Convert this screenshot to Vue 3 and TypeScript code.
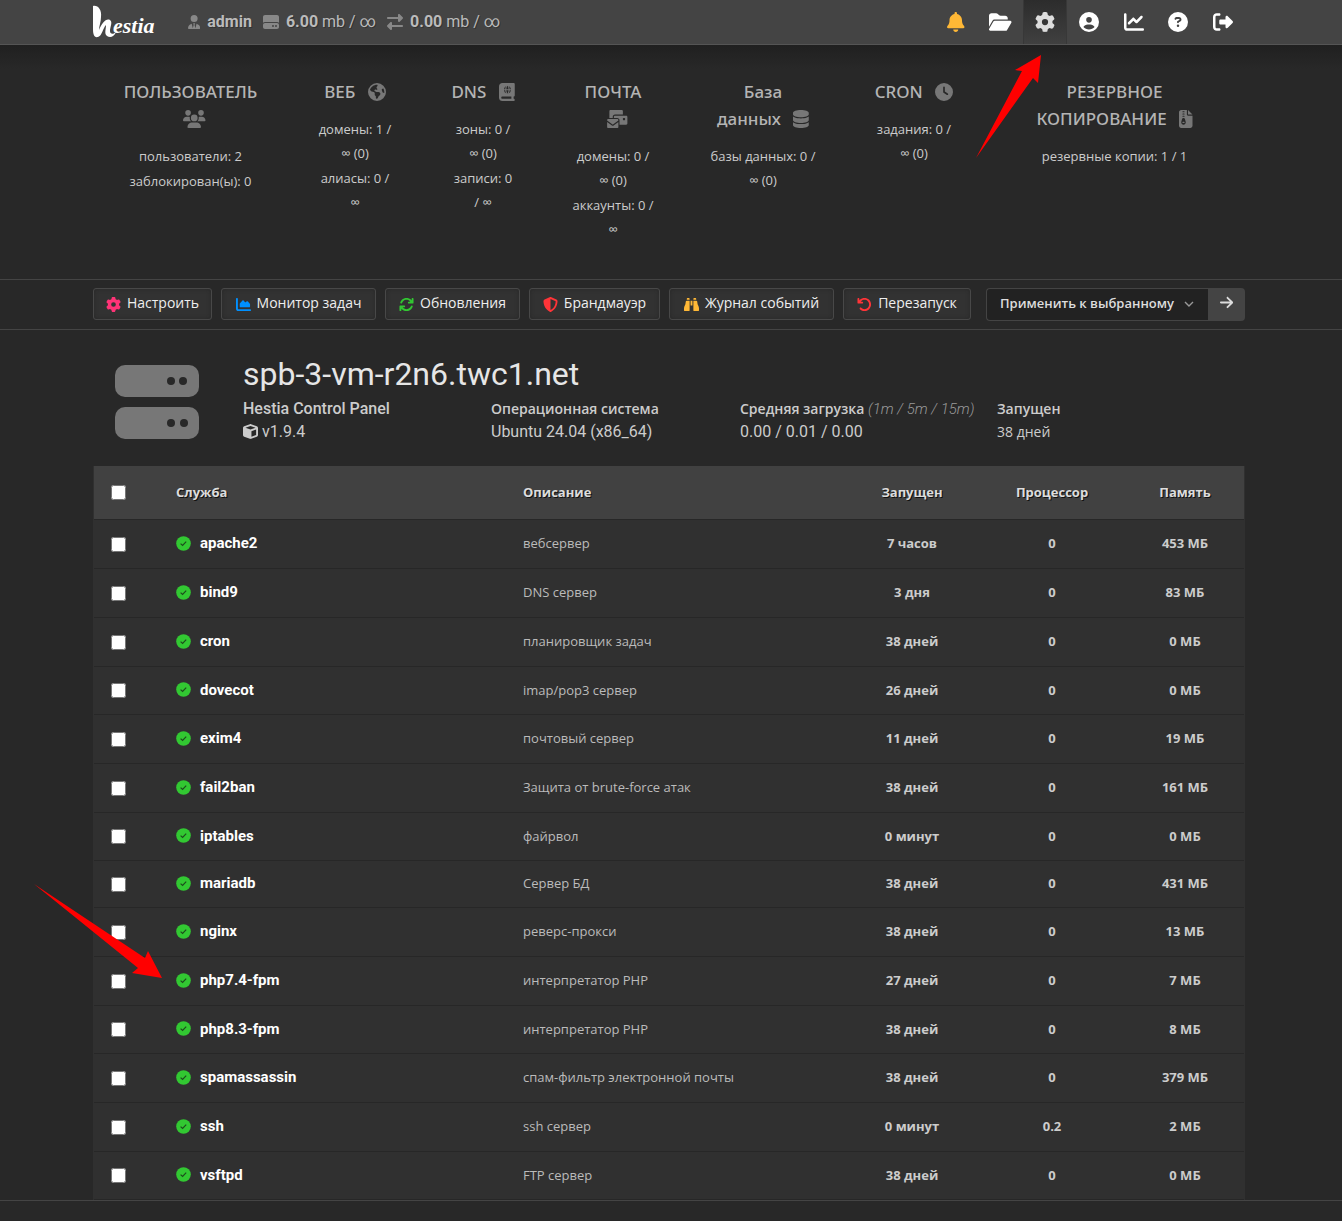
<script setup lang="ts">
import { ref } from 'vue'

interface Glyph {
  w: number
  d: string
}

const icons: Record<string, Glyph> = {
  gear: { w: 512, d: 'M495.9 166.6c3.2 8.7 .5 18.4-6.4 24.6l-43.3 39.4c1.1 8.3 1.7 16.8 1.7 25.4s-.6 17.1-1.7 25.4l43.3 39.4c6.9 6.2 9.6 15.9 6.4 24.6c-4.4 11.9-9.7 23.3-15.8 34.3l-4.7 8.1c-6.6 11-14 21.4-22.1 31.2c-5.9 7.2-15.7 9.6-24.5 6.8l-55.7-17.7c-13.4 10.3-28.2 18.9-44 25.4l-12.5 57.1c-2 9.1-9 16.3-18.2 17.8c-13.8 2.3-28 3.5-42.5 3.5s-28.7-1.2-42.5-3.5c-9.2-1.5-16.2-8.7-18.2-17.8l-12.5-57.1c-15.8-6.5-30.6-15.1-44-25.4L83.1 425.9c-8.8 2.8-18.6 .3-24.5-6.8c-8.1-9.8-15.5-20.2-22.1-31.2l-4.7-8.1c-6.1-11-11.4-22.4-15.8-34.3c-3.2-8.7-.5-18.4 6.4-24.6l43.3-39.4C64.6 273.1 64 264.6 64 256s.6-17.1 1.7-25.4L22.4 191.2c-6.9-6.2-9.6-15.9-6.4-24.6c4.4-11.9 9.7-23.3 15.8-34.3l4.7-8.1c6.6-11 14-21.4 22.1-31.2c5.9-7.2 15.7-9.6 24.5-6.8l55.7 17.7c13.4-10.3 28.2-18.9 44-25.4l12.5-57.1c2-9.1 9-16.3 18.2-17.8C227.3 1.2 241.5 0 256 0s28.7 1.2 42.5 3.5c9.2 1.5 16.2 8.7 18.2 17.8l12.5 57.1c15.8 6.5 30.6 15.1 44 25.4l55.7-17.7c8.8-2.8 18.6-.3 24.5 6.8c8.1 9.8 15.5 20.2 22.1 31.2l4.7 8.1c6.1 11 11.4 22.4 15.8 34.3zM256 336a80 80 0 1 0 0-160 80 80 0 1 0 0 160z' },
  bell: { w: 448, d: 'M224 0c-17.7 0-32 14.3-32 32V51.2C119 66 64 130.6 64 208v18.8c0 47-17.3 92.4-48.5 127.6l-7.4 8.3c-8.4 9.4-10.4 22.9-5.3 34.4S19.4 416 32 416H416c12.6 0 24-7.4 29.2-18.9s3.1-25-5.3-34.4l-7.4-8.3C401.3 319.2 384 273.9 384 226.8V208c0-77.4-55-142-128-156.8V32c0-17.7-14.3-32-32-32zm45.3 493.3c12-12 18.7-28.3 18.7-45.3H224 160c0 17 6.7 33.3 18.7 45.3s28.3 18.7 45.3 18.7s33.3-6.7 45.3-18.7z' },
  folder: { w: 576, d: 'M88.7 223.8L0 375.8V96C0 60.7 28.7 32 64 32H181.5c17 0 33.3 6.7 45.3 18.7l26.5 26.5c12 12 28.3 18.7 45.3 18.7H416c35.3 0 64 28.7 64 64v32H144c-22.8 0-43.8 12.1-55.3 31.8zm27.6 16.1C122.1 230 132.6 224 144 224H544c11.5 0 22 6.1 27.7 16.1s5.7 22.2-.1 32.1l-112 192C453.9 474 443.4 480 432 480H32c-11.5 0-22-6.1-27.7-16.1s-5.7-22.2 .1-32.1l112-192z' },
  user: { w: 512, d: 'M399 384.2C376.9 345.8 335.4 320 288 320H224c-47.4 0-88.9 25.8-111 64.2c35.2 39.2 86.2 63.8 143 63.8s107.8-24.7 143-63.8zM0 256a256 256 0 1 1 512 0A256 256 0 1 1 0 256zm256 16a72 72 0 1 0 0-144 72 72 0 1 0 0 144z' },
  chart: { w: 512, d: 'M64 64c0-17.7-14.3-32-32-32S0 46.3 0 64V400c0 44.2 35.8 80 80 80H480c17.7 0 32-14.3 32-32s-14.3-32-32-32H80c-8.8 0-16-7.2-16-16V64zm406.6 86.6c12.5-12.5 12.5-32.8 0-45.3s-32.8-12.5-45.3 0L320 210.7l-57.4-57.4c-12.5-12.5-32.8-12.5-45.3 0l-112 112c-12.5 12.5-12.5 32.8 0 45.3s32.8 12.5 45.3 0L240 221.3l57.4 57.4c12.5 12.5 32.8 12.5 45.3 0l128-128z' },
  help: { w: 512, d: 'M256 512A256 256 0 1 0 256 0a256 256 0 1 0 0 512zM169.8 165.3c7.9-22.3 29.1-37.3 52.8-37.3h58.3c34.9 0 63.1 28.3 63.1 63.1c0 22.6-12.1 43.5-31.7 54.8L280 264.4c-.2 13-10.9 23.6-24 23.6c-13.3 0-24-10.7-24-24V250.5c0-8.6 4.6-16.5 12.1-20.8l44.3-25.4c4.7-2.7 7.6-7.7 7.6-13.1c0-8.4-6.8-15.1-15.1-15.1H222.6c-3.4 0-6.4 2.1-7.5 5.3l-.4 1.2c-4.4 12.5-18.2 19-30.6 14.6s-19-18.2-14.6-30.6l.4-1.2zM224 352a32 32 0 1 1 64 0 32 32 0 1 1 -64 0z' },
  exit: { w: 512, d: 'M377.9 105.9L500.7 228.7c7.2 7.2 11.3 17.1 11.3 27.3s-4.1 20.1-11.3 27.3L377.9 406.1c-6.4 6.4-15 9.9-24 9.9c-18.7 0-33.9-15.2-33.9-33.9l0-62.1-128 0c-17.7 0-32-14.3-32-32l0-64c0-17.7 14.3-32 32-32l128 0 0-62.1c0-18.7 15.2-33.9 33.9-33.9c9 0 17.6 3.6 24 9.9zM160 96L96 96c-17.7 0-32 14.3-32 32l0 256c0 17.7 14.3 32 32 32l64 0c17.7 0 32 14.3 32 32s-14.3 32-32 32l-64 0c-53 0-96-43-96-96L0 128C0 75 43 32 96 32l64 0c17.7 0 32 14.3 32 32s-14.3 32-32 32z' },
  tie: { w: 448, d: 'M96 128a128 128 0 1 0 256 0A128 128 0 1 0 96 128zm94.5 200.2l18.6 31L175.8 483.1l-36-146.9c-2-8.1-9.8-13.4-17.9-11.3C51.9 342.4 0 405.8 0 481.3c0 17 13.8 30.7 30.7 30.7H162.5c0 0 0 0 .1 0H168 280h5.5c0 0 0 0 .1 0H417.3c17 0 30.7-13.8 30.7-30.7c0-75.5-51.9-138.9-121.9-156.4c-8.1-2-15.9 3.3-17.9 11.3l-36 146.9L238.9 359.2l18.6-31c6.4-10.7-1.3-24.2-13.7-24.2H224 204.3c-12.4 0-20.1 13.6-13.7 24.2z' },
  drive: { w: 512, d: 'M0 96C0 60.7 28.7 32 64 32H448c35.3 0 64 28.7 64 64V280.4c-17-15.2-39.4-24.4-64-24.4H64c-24.6 0-47 9.2-64 24.4V96zM64 288H448c35.3 0 64 28.7 64 64v64c0 35.3-28.7 64-64 64H64c-35.3 0-64-28.7-64-64V352c0-35.3 28.7-64 64-64zM320 416a32 32 0 1 0 0-64 32 32 0 1 0 0 64zm128-32a32 32 0 1 0 -64 0 32 32 0 1 0 64 0z' },
  traffic: { w: 512, d: 'M32 96l320 0V32c0-12.9 7.8-24.6 19.8-29.6s25.7-2.2 34.9 6.9l96 96c6 6 9.4 14.1 9.4 22.6s-3.4 16.6-9.4 22.6l-96 96c-9.2 9.2-22.9 11.9-34.9 6.9s-19.8-16.6-19.8-29.6V160L32 160c-17.7 0-32-14.3-32-32s14.3-32 32-32zM480 352c17.7 0 32 14.3 32 32s-14.3 32-32 32H160v64c0 12.9-7.8 24.6-19.8 29.6s-25.7 2.2-34.9-6.9l-96-96c-6-6-9.4-14.1-9.4-22.6s3.4-16.6 9.4-22.6l96-96c9.2-9.2 22.9-11.9 34.9-6.9s19.8 16.6 19.8 29.6l0 64H480z' },
  users: { w: 640, d: 'M144 0a80 80 0 1 1 0 160A80 80 0 1 1 144 0zM512 0a80 80 0 1 1 0 160A80 80 0 1 1 512 0zM0 298.7C0 239.8 47.8 192 106.7 192h42.7c15.9 0 31 3.5 44.6 9.7c-1.3 7.2-1.9 14.7-1.9 22.3c0 38.2 16.8 72.5 43.3 96c-.2 0-.4 0-.7 0H21.3C9.6 320 0 310.4 0 298.7zM405.3 320c-.2 0-.4 0-.7 0c26.6-23.5 43.3-57.8 43.3-96c0-7.6-.7-15-1.9-22.3c13.6-6.3 28.7-9.7 44.6-9.7h42.7C592.2 192 640 239.8 640 298.7c0 11.8-9.6 21.3-21.3 21.3H405.3zM224 224a96 96 0 1 1 192 0 96 96 0 1 1 -192 0zM128 485.3C128 411.7 187.7 352 261.3 352H378.7C452.3 352 512 411.7 512 485.3c0 14.7-11.9 26.7-26.7 26.7H154.7c-14.7 0-26.7-11.9-26.7-26.7z' },
  earth: { w: 512, d: 'M57.7 193l9.4 16.4c8.3 14.5 21.9 25.2 38 29.8L163 255.7c17.2 4.9 29 20.6 29 38.5v39.9c0 11 6.2 21 16 25.9s16 14.9 16 25.9v39c0 15.6 14.9 26.9 29.9 22.6c16.1-4.6 28.6-17.5 32.7-33.8l2.8-11.2c4.2-16.9 15.2-31.4 30.3-40l8.1-4.6c15-8.5 24.2-24.5 24.2-41.7v-8.3c0-12.7-5.1-24.9-14.1-33.9l-3.9-3.9c-9-9-21.2-14.1-33.9-14.1H257c-11.1 0-22.1-2.9-31.8-8.4l-34.5-19.7c-4.3-2.5-7.6-6.5-9.2-11.2c-3.2-9.6 1.1-20 10.2-24.5l5.9-3c6.6-3.3 14.3-3.9 21.3-1.5l23.2 7.7c8.2 2.7 17.2-.4 21.9-7.5c4.7-7 4.2-16.3-1.2-22.8l-13.6-16.3c-10-12-9.9-29.5 .3-41.3l15.7-18.3c8.8-10.3 10.2-25 3.5-36.7l-2.4-4.2c-3.5-.2-6.9-.3-10.4-.3C163.1 48 84.4 108.9 57.7 193zM464 256c0-36.8-9.6-71.4-26.4-101.5L412 164.8c-15.7 6.3-23.8 23.8-18.5 39.8l16.9 50.7c3.5 10.4 12 18.3 22.6 20.9l29.1 7.3c1.2-9 1.8-18.2 1.8-27.5zM0 256a256 256 0 1 1 512 0A256 256 0 1 1 0 256z' },
  atlas: { w: 448, d: 'M0 96C0 43 43 0 96 0H416c17.7 0 32 14.3 32 32V352c0 17.7-14.3 32-32 32v64c17.7 0 32 14.3 32 32s-14.3 32-32 32H96c-53 0-96-43-96-96V96zM64 416c0 17.7 14.3 32 32 32H352V384H96c-17.7 0-32 14.3-32 32zM176 177q4-60 32-92q-58 24-66 92zM208 177h64q-6-70-32-97q-26 27-32 97zM304 177h35q-8-68-67-92q28 32 32 92zM176 209h-34q8 66 66 90q-28-32-32-90zM208 209q6 68 32 95q26-27 32-95zM304 209q-4 58-32 90q59-24 67-90z' },
  mails: { w: 640, d: 'M128 0C110.3 0 96 14.3 96 32V224h96V192c0-35.3 28.7-64 64-64H480V32c0-17.7-14.3-32-32-32H128zM256 160c-17.7 0-32 14.3-32 32v32h96c35.3 0 64 28.7 64 64V416H576c17.7 0 32-14.3 32-32V192c0-17.7-14.3-32-32-32H256zm240 64h32c8.8 0 16 7.2 16 16v32c0 8.8-7.2 16-16 16H496c-8.8 0-16-7.2-16-16V240c0-8.8 7.2-16 16-16zM64 256c-17.7 0-32 14.3-32 32v13L187.1 415.9c1.4 1 3.1 1.6 4.9 1.6s3.5-.6 4.9-1.6L352 301V288c0-17.7-14.3-32-32-32H64zm288 84.8L216 441.6c-6.9 5.1-15.3 7.9-24 7.9s-17-2.8-24-7.9L32 340.8V480c0 17.7 14.3 32 32 32H320c17.7 0 32-14.3 32-32V340.8z' },
  database: { w: 448, d: 'M448 80v48c0 44.2-100.3 80-224 80S0 172.2 0 128V80C0 35.8 100.3 0 224 0S448 35.8 448 80zM393.2 214.7c20.8-7.4 39.9-16.9 54.8-28.6V288c0 44.2-100.3 80-224 80S0 332.2 0 288V186.1c14.9 11.8 34 21.2 54.8 28.6C99.7 230.7 159.5 240 224 240s124.3-9.3 169.2-25.3zM0 346.1c14.9 11.8 34 21.2 54.8 28.6C99.7 390.7 159.5 400 224 400s124.3-9.3 169.2-25.3c20.8-7.4 39.9-16.9 54.8-28.6V432c0 44.2-100.3 80-224 80S0 476.2 0 432V346.1z' },
  clock: { w: 512, d: 'M256 0a256 256 0 1 1 0 512A256 256 0 1 1 256 0zM232 120V256c0 8 4 15.5 10.7 20l96 64c11 7.4 25.9 4.4 33.3-6.7s4.4-25.9-6.7-33.3L280 243.2V120c0-13.3-10.7-24-24-24s-24 10.7-24 24z' },
  zip: { w: 384, d: 'M64 0C28.7 0 0 28.7 0 64V448c0 35.3 28.7 64 64 64H320c35.3 0 64-28.7 64-64V160H256c-17.7 0-32-14.3-32-32V0H64zM256 0V128H384L256 0zM96 48c0-8.8 7.2-16 16-16h32c8.8 0 16 7.2 16 16s-7.2 16-16 16H112c-8.8 0-16-7.2-16-16zm0 64c0-8.8 7.2-16 16-16h32c8.8 0 16 7.2 16 16s-7.2 16-16 16H112c-8.8 0-16-7.2-16-16zm0 64c0-8.8 7.2-16 16-16h32c8.8 0 16 7.2 16 16s-7.2 16-16 16H112c-8.8 0-16-7.2-16-16zm-6.3 71.8c3.7-14 16.4-23.8 30.9-23.8h14.8c14.5 0 27.2 9.7 30.9 23.8l23.5 88.2c1.4 5.4 2.1 10.9 2.1 16.4c0 35.2-28.8 63.7-64 63.7s-64-28.5-64-63.7c0-5.5 .7-11.1 2.1-16.4l23.5-88.2zM112 336c-8.8 0-16 7.2-16 16s7.2 16 16 16h32c8.8 0 16-7.2 16-16s-7.2-16-16-16H112z' },
  area: { w: 512, d: 'M64 64c0-17.7-14.3-32-32-32S0 46.3 0 64V400c0 44.2 35.8 80 80 80H480c17.7 0 32-14.3 32-32s-14.3-32-32-32H80c-8.8 0-16-7.2-16-16V64zm96 288H448c17.7 0 32-14.3 32-32V251.8c0-7.6-2.7-15-7.7-20.8l-65.8-76.8c-12.1-14.2-33.7-15-46.9-1.8l-21 21c-10 10-26.4 9.2-35.4-1.6l-39.2-47c-12.6-15.1-35.7-15.4-48.7-.6L135.9 215c-5.1 5.8-7.9 13.3-7.9 21.1v84c0 17.7 14.3 32 32 32z' },
  refresh: { w: 512, d: 'M105.1 202.6c7.7-21.8 20.2-42.3 37.8-59.8c62.5-62.5 163.8-62.5 226.3 0L386.3 160H336c-17.7 0-32 14.3-32 32s14.3 32 32 32H463.5c0 0 0 0 0 0h.4c17.7 0 32-14.3 32-32V64c0-17.7-14.3-32-32-32s-32 14.3-32 32v51.2L414.4 97.6c-87.5-87.5-229.3-87.5-316.8 0C73.2 122 55.6 150.7 44.8 181.4c-5.9 16.7 2.9 34.9 19.5 40.8s34.9-2.9 40.8-19.5zM39 289.3c-5 1.5-9.8 4.2-13.7 8.2c-4 4-6.7 8.8-8.1 14c-.3 1.2-.6 2.5-.8 3.8c-.3 1.7-.4 3.4-.4 5.1V448c0 17.7 14.3 32 32 32s32-14.3 32-32V396.9l17.6 17.5 0 0c87.5 87.4 229.3 87.4 316.7 0c24.4-24.4 42.1-53.1 52.9-83.7c5.9-16.7-2.9-34.9-19.5-40.8s-34.9 2.9-40.8 19.5c-7.7 21.8-20.2 42.3-37.8 59.8c-62.5 62.5-163.8 62.5-226.3 0l-.1-.1L125.6 352H176c17.7 0 32-14.3 32-32s-14.3-32-32-32H48.4c-1.6 0-3.2 .1-4.8 .3s-3.1 .5-4.6 1z' },
  shield: { w: 512, d: 'M256 0c4.6 0 9.2 1 13.4 2.9L457.7 82.8c22 9.3 38.4 31 38.3 57.2c-.5 99.2-41.3 280.7-213.6 363.2c-16.7 8-36.1 8-52.8 0C57.3 420.7 16.5 239.2 16 140c-.1-26.2 16.3-47.9 38.3-57.2L242.7 2.9C246.8 1 251.4 0 256 0zm0 66.8V444.8C394 378 431.1 230.1 432 141.4L256 66.8l0 0z' },
  binoculars: { w: 512, d: 'M128 32h32c17.7 0 32 14.3 32 32V96H96V64c0-17.7 14.3-32 32-32zm64 96V448c0 17.7-14.3 32-32 32H32c-17.7 0-32-14.3-32-32V388.9c0-34.6 9.4-68.6 27.2-98.3C40.9 267.8 49.7 242.4 53 216L60.5 156c2-16 15.6-28 31.8-28H192zm227.8 0c16.1 0 29.8 12 31.8 28L459 216c3.3 26.4 12.1 51.8 25.8 74.6c17.8 29.7 27.2 63.7 27.2 98.3V448c0 17.7-14.3 32-32 32H352c-17.7 0-32-14.3-32-32V128h99.8zM320 64c0-17.7 14.3-32 32-32h32c17.7 0 32 14.3 32 32V96H320V64zm-32 64V288H224V128h64z' },
  undo: { w: 512, d: 'M125.7 160H176c17.7 0 32 14.3 32 32s-14.3 32-32 32H48c-17.7 0-32-14.3-32-32V64c0-17.7 14.3-32 32-32s32 14.3 32 32v51.2L97.6 97.6c87.5-87.5 229.3-87.5 316.8 0s87.5 229.3 0 316.8s-229.3 87.5-316.8 0c-12.5-12.5-12.5-32.8 0-45.3s32.8-12.5 45.3 0c62.5 62.5 163.8 62.5 226.3 0s62.5-163.8 0-226.3s-163.8-62.5-226.3 0L125.7 160z' },
  cube: { w: 512, d: 'M234.5 5.7c13.9-5 29.1-5 43.1 0l192 68.6C495 83.4 512 107.5 512 134.6V377.4c0 27-17 51.2-42.5 60.3l-192 68.6c-13.9 5-29.1 5-43.1 0l-192-68.6C17 428.6 0 404.5 0 377.4V134.6c0-27 17-51.2 42.5-60.3l192-68.6zM256 66L82.3 128 256 190l173.7-62L256 66zm32 368.6l160-57.1v-188L288 246.6v188z' },
  arrow: { w: 448, d: 'M438.6 278.6c12.5-12.5 12.5-32.8 0-45.3l-160-160c-12.5-12.5-32.8-12.5-45.3 0s-12.5 32.8 0 45.3L338.8 224 32 224c-17.7 0-32 14.3-32 32s14.3 32 32 32l306.7 0L233.4 393.4c-12.5 12.5-12.5 32.8 0 45.3s32.8 12.5 45.3 0l160-160z' },
}

const box = (name: string) => `0 0 ${icons[name].w} 512`

const nav = [
  { icon: 'bell', label: 'Уведомления' },
  { icon: 'folder', label: 'Файлы' },
  { icon: 'gear', label: 'Сервер' },
  { icon: 'user', label: 'Профиль' },
  { icon: 'chart', label: 'Статистика' },
  { icon: 'help', label: 'Помощь' },
  { icon: 'exit', label: 'Выход' },
]

const stats = [
  { title: ['ПОЛЬЗОВАТЕЛЬ', ''], icon: 'users', items: [['пользователи: 2'], ['заблокирован(ы): 0']] },
  { title: ['ВЕБ'], icon: 'earth', items: [['домены: 1 /', '∞ (0)'], ['алиасы: 0 /', '∞']] },
  { title: ['DNS'], icon: 'atlas', items: [['зоны: 0 /', '∞ (0)'], ['записи: 0', '/ ∞']] },
  { title: ['ПОЧТА', ''], icon: 'mails', items: [['домены: 0 /', '∞ (0)'], ['аккаунты: 0 /', '∞']] },
  { title: ['База', 'данных'], icon: 'database', items: [['базы данных: 0 /', '∞ (0)']] },
  { title: ['CRON'], icon: 'clock', items: [['задания: 0 /', '∞ (0)']] },
  { title: ['РЕЗЕРВНОЕ', 'КОПИРОВАНИЕ'], icon: 'zip', items: [['резервные копии: 1 / 1']] },
]

const actions = [
  { icon: 'gear', tone: 'pink', label: 'Настроить' },
  { icon: 'area', tone: 'blue', label: 'Монитор задач' },
  { icon: 'refresh', tone: 'green', label: 'Обновления' },
  { icon: 'shield', tone: 'red', label: 'Брандмауэр' },
  { icon: 'binoculars', tone: 'orange', label: 'Журнал событий' },
  { icon: 'undo', tone: 'red', label: 'Перезапуск' },
]

interface Service {
  name: string
  text: string
  up: string
  cpu: string
  mem: string
}

const services: Service[] = [
  { name: 'apache2', text: 'вебсервер', up: '7 часов', cpu: '0', mem: '453 МБ' },
  { name: 'bind9', text: 'DNS сервер', up: '3 дня', cpu: '0', mem: '83 МБ' },
  { name: 'cron', text: 'планировщик задач', up: '38 дней', cpu: '0', mem: '0 МБ' },
  { name: 'dovecot', text: 'imap/pop3 сервер', up: '26 дней', cpu: '0', mem: '0 МБ' },
  { name: 'exim4', text: 'почтовый сервер', up: '11 дней', cpu: '0', mem: '19 МБ' },
  { name: 'fail2ban', text: 'Защита от brute-force атак', up: '38 дней', cpu: '0', mem: '161 МБ' },
  { name: 'iptables', text: 'файрвол', up: '0 минут', cpu: '0', mem: '0 МБ' },
  { name: 'mariadb', text: 'Сервер БД', up: '38 дней', cpu: '0', mem: '431 МБ' },
  { name: 'nginx', text: 'реверс-прокси', up: '38 дней', cpu: '0', mem: '13 МБ' },
  { name: 'php7.4-fpm', text: 'интерпретатор PHP', up: '27 дней', cpu: '0', mem: '7 МБ' },
  { name: 'php8.3-fpm', text: 'интерпретатор PHP', up: '38 дней', cpu: '0', mem: '8 МБ' },
  { name: 'spamassassin', text: 'спам-фильтр электронной почты', up: '38 дней', cpu: '0', mem: '379 МБ' },
  { name: 'ssh', text: 'ssh сервер', up: '0 минут', cpu: '0.2', mem: '2 МБ' },
  { name: 'vsftpd', text: 'FTP сервер', up: '38 дней', cpu: '0', mem: '0 МБ' },
]

const selected = ref<string[]>([])

function toggleAll(event: Event) {
  const on = (event.target as HTMLInputElement).checked
  selected.value = on ? services.map((s) => s.name) : []
}
</script>

<template>
  <div class="page">
    <header class="top">
      <div class="container top-row">
        <a class="logo" href="#" aria-label="Hestia">
          <svg viewBox="0 0 64 34" width="64" height="34">
            <path
              d="M0 1C5 0 9 5 8 12C8 17 6 21 6 25C9 18 13 13 17 15C20 17 17 22 17 26C17 29 20 30 23 27C21 32 17 33 14 31C11 29 13 24 13 20C10 23 9 31 5 32C1 33 0 29 0 24Z"
              fill="#fff"
            />
            <text x="20" y="28" class="logo-text">estia</text>
          </svg>
        </a>
        <div class="usage">
          <span class="usage-item">
            <svg class="ico dim" :viewBox="box('tie')" height="14"><path :d="icons.tie.d" /></svg>
            <b>admin</b>
          </span>
          <span class="usage-item">
            <svg class="ico dim" :viewBox="box('drive')" height="16"><path :d="icons.drive.d" /></svg>
            <span><b>6.00</b> mb / ∞</span>
          </span>
          <span class="usage-item">
            <svg class="ico dim" :viewBox="box('traffic')" height="16"><path :d="icons.traffic.d" /></svg>
            <span><b>0.00</b> mb / ∞</span>
          </span>
        </div>
        <nav class="menu">
          <a
            v-for="n in nav"
            :key="n.icon"
            href="#"
            :aria-label="n.label"
            class="menu-link"
            :class="{ active: n.icon === 'gear', bell: n.icon === 'bell' }"
          >
            <svg class="ico" :viewBox="box(n.icon)" height="20"><path :d="icons[n.icon].d" /></svg>
          </a>
        </nav>
      </div>
    </header>

    <section class="stats-band">
      <div class="container stats">
        <a v-for="s in stats" :key="s.icon" href="#" class="stat">
          <h2 class="stat-title">
            <span v-for="(line, i) in s.title" :key="i" class="line">
              {{ line }}
              <svg v-if="i === s.title.length - 1" class="ico stat-ico" :viewBox="box(s.icon)" height="18">
                <path :d="icons[s.icon].d" />
              </svg>
            </span>
          </h2>
          <p v-for="(item, j) in s.items" :key="j" class="stat-item">
            <span v-for="line in item" :key="line" class="line">{{ line }}</span>
          </p>
        </a>
      </div>
    </section>

    <div class="toolbar">
      <div class="container toolbar-row">
        <div class="actions">
          <button v-for="a in actions" :key="a.label" type="button" class="action">
            <svg class="ico" :class="a.tone" :viewBox="box(a.icon)" height="15"><path :d="icons[a.icon].d" /></svg>
            <span class="action-label">{{ a.label }}</span>
          </button>
        </div>
        <form class="bulk" @submit.prevent>
          <div class="bulk-field">
            <select class="bulk-select" aria-label="Применить к выбранному">
              <option>Применить к выбранному</option>
            </select>
            <svg class="chevron" viewBox="0 0 10 6" width="10" height="6">
              <path d="M1 1L5 5L9 1" fill="none" stroke="#999" stroke-width="1.4" />
            </svg>
          </div>
          <button type="submit" class="bulk-go" aria-label="Применить">
            <svg class="ico" :viewBox="box('arrow')" height="15"><path :d="icons.arrow.d" /></svg>
          </button>
        </form>
      </div>
    </div>

    <main class="container">
      <section class="server">
        <svg class="server-ico" viewBox="0 0 84 74" width="84" height="74">
          <rect width="84" height="32" rx="10" />
          <rect y="42" width="84" height="32" rx="10" />
          <g fill="#282828">
            <circle cx="56" cy="16" r="4" />
            <circle cx="68" cy="16" r="4" />
            <circle cx="56" cy="58" r="4" />
            <circle cx="69" cy="58" r="4" />
          </g>
        </svg>
        <div class="server-info">
          <h1>spb-3-vm-r2n6.twc1.net</h1>
          <dl class="facts">
            <div>
              <dt class="latin">Hestia Control Panel</dt>
              <dd class="latin">
                <svg class="ico cube" :viewBox="box('cube')" height="15"><path :d="icons.cube.d" /></svg>
                v1.9.4
              </dd>
            </div>
            <div>
              <dt>Операционная система</dt>
              <dd class="latin">Ubuntu 24.04 (x86_64)</dd>
            </div>
            <div>
              <dt>Средняя загрузка <i>(1m / 5m / 15m)</i></dt>
              <dd class="latin">0.00 / 0.01 / 0.00</dd>
            </div>
            <div>
              <dt>Запущен</dt>
              <dd>38 дней</dd>
            </div>
          </dl>
        </div>
      </section>

      <table class="services">
        <colgroup>
          <col class="c-check" />
          <col class="c-name" />
          <col class="c-text" />
          <col class="c-up" />
          <col class="c-cpu" />
          <col class="c-mem" />
        </colgroup>
        <thead>
          <tr>
            <th class="check"><input type="checkbox" aria-label="Выбрать все" @change="toggleAll" /></th>
            <th>Служба</th>
            <th>Описание</th>
            <th class="num">Запущен</th>
            <th class="num">Процессор</th>
            <th class="num">Память</th>
          </tr>
        </thead>
        <tbody>
          <tr v-for="s in services" :key="s.name">
            <td class="check"><input v-model="selected" type="checkbox" :value="s.name" :aria-label="s.name" /></td>
            <td>
              <a href="#" class="service">
                <svg viewBox="0 0 15 15" width="15" height="15">
                  <circle cx="7.5" cy="7.5" r="7.3" fill="#32c832" />
                  <path d="M4.6 7.6L6.6 9.5L10.2 5.7" fill="none" stroke="#1d4d1d" stroke-width="1.2" />
                </svg>
                {{ s.name }}
              </a>
            </td>
            <td class="text">{{ s.text }}</td>
            <td class="num">{{ s.up }}</td>
            <td class="num">{{ s.cpu }}</td>
            <td class="num">{{ s.mem }}</td>
          </tr>
        </tbody>
      </table>
    </main>
    <footer class="bottom"></footer>

    <svg class="pointer to-menu" viewBox="976 55 66 103" width="66" height="103">
      <path d="M1041 55L1015 70L1022 71L976 158L1033 78L1038 83Z" />
    </svg>
    <svg class="pointer to-row" viewBox="34 884 128 94" width="128" height="94">
      <path d="M34 884L145 958L148 951L162 978L132 973L138 968Z" />
    </svg>
  </div>
</template>

<style>
body {
  background: #282828;
}
</style>

<style scoped>
.page {
  position: relative;
  overflow: hidden;
  background: #282828;
  color: #ccc;
  font: 14px/24px "Open Sans", "Noto Sans", sans-serif;
}
* {
  box-sizing: border-box;
}
a {
  color: inherit;
  text-decoration: none;
}
h1,
h2,
p,
dl,
dd {
  margin: 0;
}
.latin {
  font-family: Roboto, sans-serif;
}
.ico {
  flex: none;
  fill: currentColor;
  fill-rule: evenodd;
}
.container {
  max-width: 1152px;
  margin: 0 auto;
}
.top,
.stats-band,
.toolbar,
.page > main {
  padding-right: 4px;
}
.page > main {
  max-width: 1156px;
}

.top {
  height: 45px;
  background: #444;
  border-bottom: 1px solid #555;
}
.top-row {
  display: flex;
  align-items: center;
  height: 44px;
}
.logo {
  display: flex;
  width: 95px;
}
.logo-text {
  font: italic bold 22px "Liberation Serif", serif;
  fill: #fff;
}
.usage {
  display: flex;
  gap: 11px;
  flex: 1;
  font: 16px/24px Roboto, sans-serif;
  color: #bbb;
  text-shadow: 1px 1px #333;
}
.usage-item {
  display: flex;
  align-items: center;
  gap: 7px;
}
.dim {
  color: #888;
}
.menu {
  display: grid;
  grid-template-columns: repeat(7, 1fr);
  width: 311px;
  height: 44px;
}
.menu-link {
  display: flex;
  align-items: center;
  justify-content: center;
  color: #fff;
}
.menu-link.bell {
  color: #ffb836;
}
.menu-link.active {
  background: linear-gradient(#2c2c2c, #404040);
  border: solid #383838;
  border-width: 0 1px;
  color: #ddd;
}

.stats-band {
  background: linear-gradient(#202020, #282828 24px);
}
.stats {
  display: grid;
  grid-template-columns: 195fr 134fr 122fr 138fr 162fr 140fr 261fr;
  padding: 33px 0 38px;
  text-align: center;
}
.line {
  display: block;
  white-space: nowrap;
}
.stat-title {
  margin-bottom: 12px;
  font: 500 17px/27px "Noto Sans", "Open Sans", sans-serif;
  color: #b4b4b4;
}
.stat-title .line {
  min-height: 27px;
}
.stat-ico {
  margin-left: 8px;
  vertical-align: -3px;
  color: #777;
}
.stat-item {
  font-size: 13px;
  color: #ccc;
}
.stat-item + .stat-item {
  margin-top: 1px;
}

.toolbar {
  border: solid #444;
  border-width: 1px 0;
}
.toolbar-row {
  display: grid;
  grid-template-columns: 878fr 259fr;
  gap: 15px;
  padding: 8px 0;
}
.actions {
  display: grid;
  grid-template-columns: 119fr 155fr 135fr 131fr 165fr 128fr;
  gap: 9px;
}
.action {
  display: flex;
  align-items: center;
  justify-content: center;
  gap: 6px;
  height: 32px;
  padding: 0;
  border: 1px solid #484848;
  border-radius: 3px;
  background: #323232;
  box-shadow: inset 0 0 4px #282828;
  color: #eee;
  font: 14px/20px "Open Sans", "Noto Sans", sans-serif;
  white-space: nowrap;
}
.action-label {
  padding-bottom: 2px;
}
.pink {
  color: #ff3377;
}
.blue {
  color: #0090ff;
}
.green {
  color: #32c832;
}
.red {
  color: #ff3438;
}
.orange {
  color: #ffb836;
}
.bulk {
  display: flex;
  height: 33px;
}
.bulk-field {
  position: relative;
  flex: 1;
}
.bulk-select {
  width: 100%;
  height: 33px;
  padding: 0 13px 3px;
  border: 1px solid #444;
  border-right: 0;
  border-radius: 4px 0 0 4px;
  appearance: none;
  background: #222;
  color: #ddd;
  font: 600 13px/20px "Open Sans", "Noto Sans", sans-serif;
}
.chevron {
  position: absolute;
  right: 14px;
  top: 13px;
  pointer-events: none;
}
.bulk-go {
  display: flex;
  align-items: center;
  justify-content: center;
  width: 37px;
  padding: 0 0 4px;
  border: 0;
  border-radius: 0 4px 4px 0;
  background: #444;
  color: #ddd;
}

.server {
  display: flex;
  gap: 44px;
  padding: 23px 0 23px 22px;
}
.server-ico {
  flex: none;
  margin-top: 12px;
  fill: #777;
}
.server-info {
  flex: 1;
}
h1 {
  margin-bottom: 1px;
  color: #e6e6e6;
  font: 32px/43px Roboto, sans-serif;
}
.facts {
  display: grid;
  grid-template-columns: 248fr 249fr 257fr 248fr;
  font-size: 14px;
  line-height: 23px;
  white-space: nowrap;
}
.facts .latin {
  font-size: 16px;
}
dt {
  font-weight: 600;
}
dt.latin {
  font-weight: 500;
}
dt i {
  color: #999;
  font: italic 300 15px/20px Roboto, sans-serif;
}
.cube {
  vertical-align: -2px;
}

.services {
  width: 100%;
  table-layout: fixed;
  border-collapse: separate;
  border-spacing: 0;
  border: solid #303030;
  border-width: 0 1px;
  font-size: 13px;
}
.c-check {
  width: 82px;
}
.c-name {
  width: 347px;
}
.c-text {
  width: 323px;
}
.c-up {
  width: 132px;
}
.c-cpu {
  width: 148px;
}
.c-mem {
  width: 118px;
}
th,
td {
  padding: 0 0 2px;
  text-align: left;
  border-bottom: 1px solid #272727;
}
th {
  height: 54px;
  background: #414141;
  color: #ddd;
  font-weight: 700;
  text-shadow: 1px 1px #111;
}
td {
  height: 49px;
  background: #303030;
}
tbody tr:nth-child(7n + 4) td,
tbody tr:nth-child(7n) td {
  height: 48px;
}
tbody tr:nth-child(8) td {
  height: 47px;
}
.check {
  padding: 0 0 0 17px;
}
.check input {
  display: block;
  width: 15px;
  height: 15px;
  margin: 0;
}
.num {
  text-align: center;
}
td.num {
  font-weight: 700;
}
td.text {
  color: #bbb;
}
.service {
  display: flex;
  align-items: center;
  gap: 9px;
  color: #fff;
  font: bold 15px/24px Roboto, sans-serif;
}

.bottom {
  height: 21px;
  border-top: 1px solid #444;
}

.pointer {
  position: absolute;
  fill: #f00;
  pointer-events: none;
}
.to-menu {
  left: 976px;
  top: 55px;
}
.to-row {
  left: 34px;
  top: 884px;
}
</style>
